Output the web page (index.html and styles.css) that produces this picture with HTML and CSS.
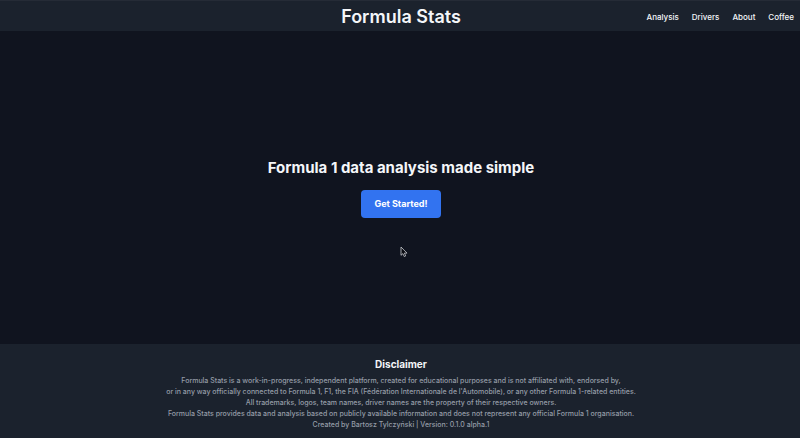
FILE: index.html
```html
<!DOCTYPE html>
<html lang="en">
<head>
<meta charset="utf-8">
<meta name="viewport" content="width=device-width, initial-scale=1">
<title>Formula Stats</title>
<link rel="stylesheet" href="styles.css">
</head>
<body>
<header class="topbar">
  <h1 class="brand">Formula Stats</h1>
  <nav class="nav">
    <a href="#">Analysis</a>
    <a href="#">Drivers</a>
    <a href="#">About</a>
    <a href="#">Coffee</a>
  </nav>
</header>
<main class="hero">
  <h2 class="hero-title">Formula 1 data analysis made simple</h2>
  <button class="start" type="button">Get Started!</button>
  <svg class="cursor" viewBox="0 0 8 12" aria-hidden="true"><path d="M1 1v8.3l1.9-1.7 1.4 3 1.4-.7-1.3-2.8H7z" fill="#0a0c12" stroke="#c8cacf" stroke-width=".8"/></svg>
</main>
<footer class="footer">
  <h3 class="footer-title">Disclaimer</h3>
  <p>Formula Stats is a work-in-progress, independent platform, created for educational purposes and is not affiliated with, endorsed by,<br>
  or in any way officially connected to Formula 1, F1, the FIA (Fédération Internationale de l'Automobile), or any other Formula 1-related entities.<br>
  All trademarks, logos, team names, driver names are the property of their respective owners.<br>
  Formula Stats provides data and analysis based on publicly available information and does not represent any official Formula 1 organisation.</p>
  <p>Created by Bartosz Tylczyński | Version: 0.1.0 alpha.1</p>
</footer>
</body>
</html>
```

FILE: styles.css
```css
* {
  box-sizing: border-box;
}

body {
  margin: 0;
  min-height: 100vh;
  display: flex;
  flex-direction: column;
  background: #10141f;
  color: #f4f6f9;
  font-family: Inter, "Liberation Sans", sans-serif;
}

h1, h2, h3, p {
  margin: 0;
}

.topbar {
  display: grid;
  grid-template-columns: 1fr auto 1fr;
  align-items: center;
  padding: 4px 6px 2px 8px;
  border-top: 1px solid #252b36;
  background: #1b222d;
}

.brand {
  grid-column: 2;
  font-size: 18px;
  line-height: 24px;
  font-weight: 600;
}

.nav {
  display: flex;
  justify-content: flex-end;
  gap: 13px;
}

.nav a {
  color: inherit;
  font-size: 8px;
  line-height: 12px;
  font-weight: 500;
  text-decoration: none;
}

.hero {
  position: relative;
  flex: 1;
  display: flex;
  flex-direction: column;
  align-items: center;
  justify-content: center;
  gap: 12px;
  padding-left: 2px;
}

.hero-title {
  font-size: 15px;
  line-height: 20px;
  font-weight: 700;
}

.start {
  padding: 8px 13px;
  border: 0;
  border-radius: 4px;
  background: #3273f0;
  color: #fff;
  font: 700 9px/12px Inter, "Liberation Sans", sans-serif;
}

.cursor {
  position: absolute;
  left: 50%;
  top: 215px;
  width: 8px;
  height: 12px;
}

.footer {
  padding: 13px 0 8px 2px;
  background: #1b222d;
  color: #959ca7;
  font-size: 7px;
  font-weight: 500;
  line-height: 11px;
  text-align: center;
}

.footer-title {
  margin-bottom: 4px;
  color: #f4f6f9;
  font-size: 10px;
  line-height: 14px;
  font-weight: 700;
}
```
